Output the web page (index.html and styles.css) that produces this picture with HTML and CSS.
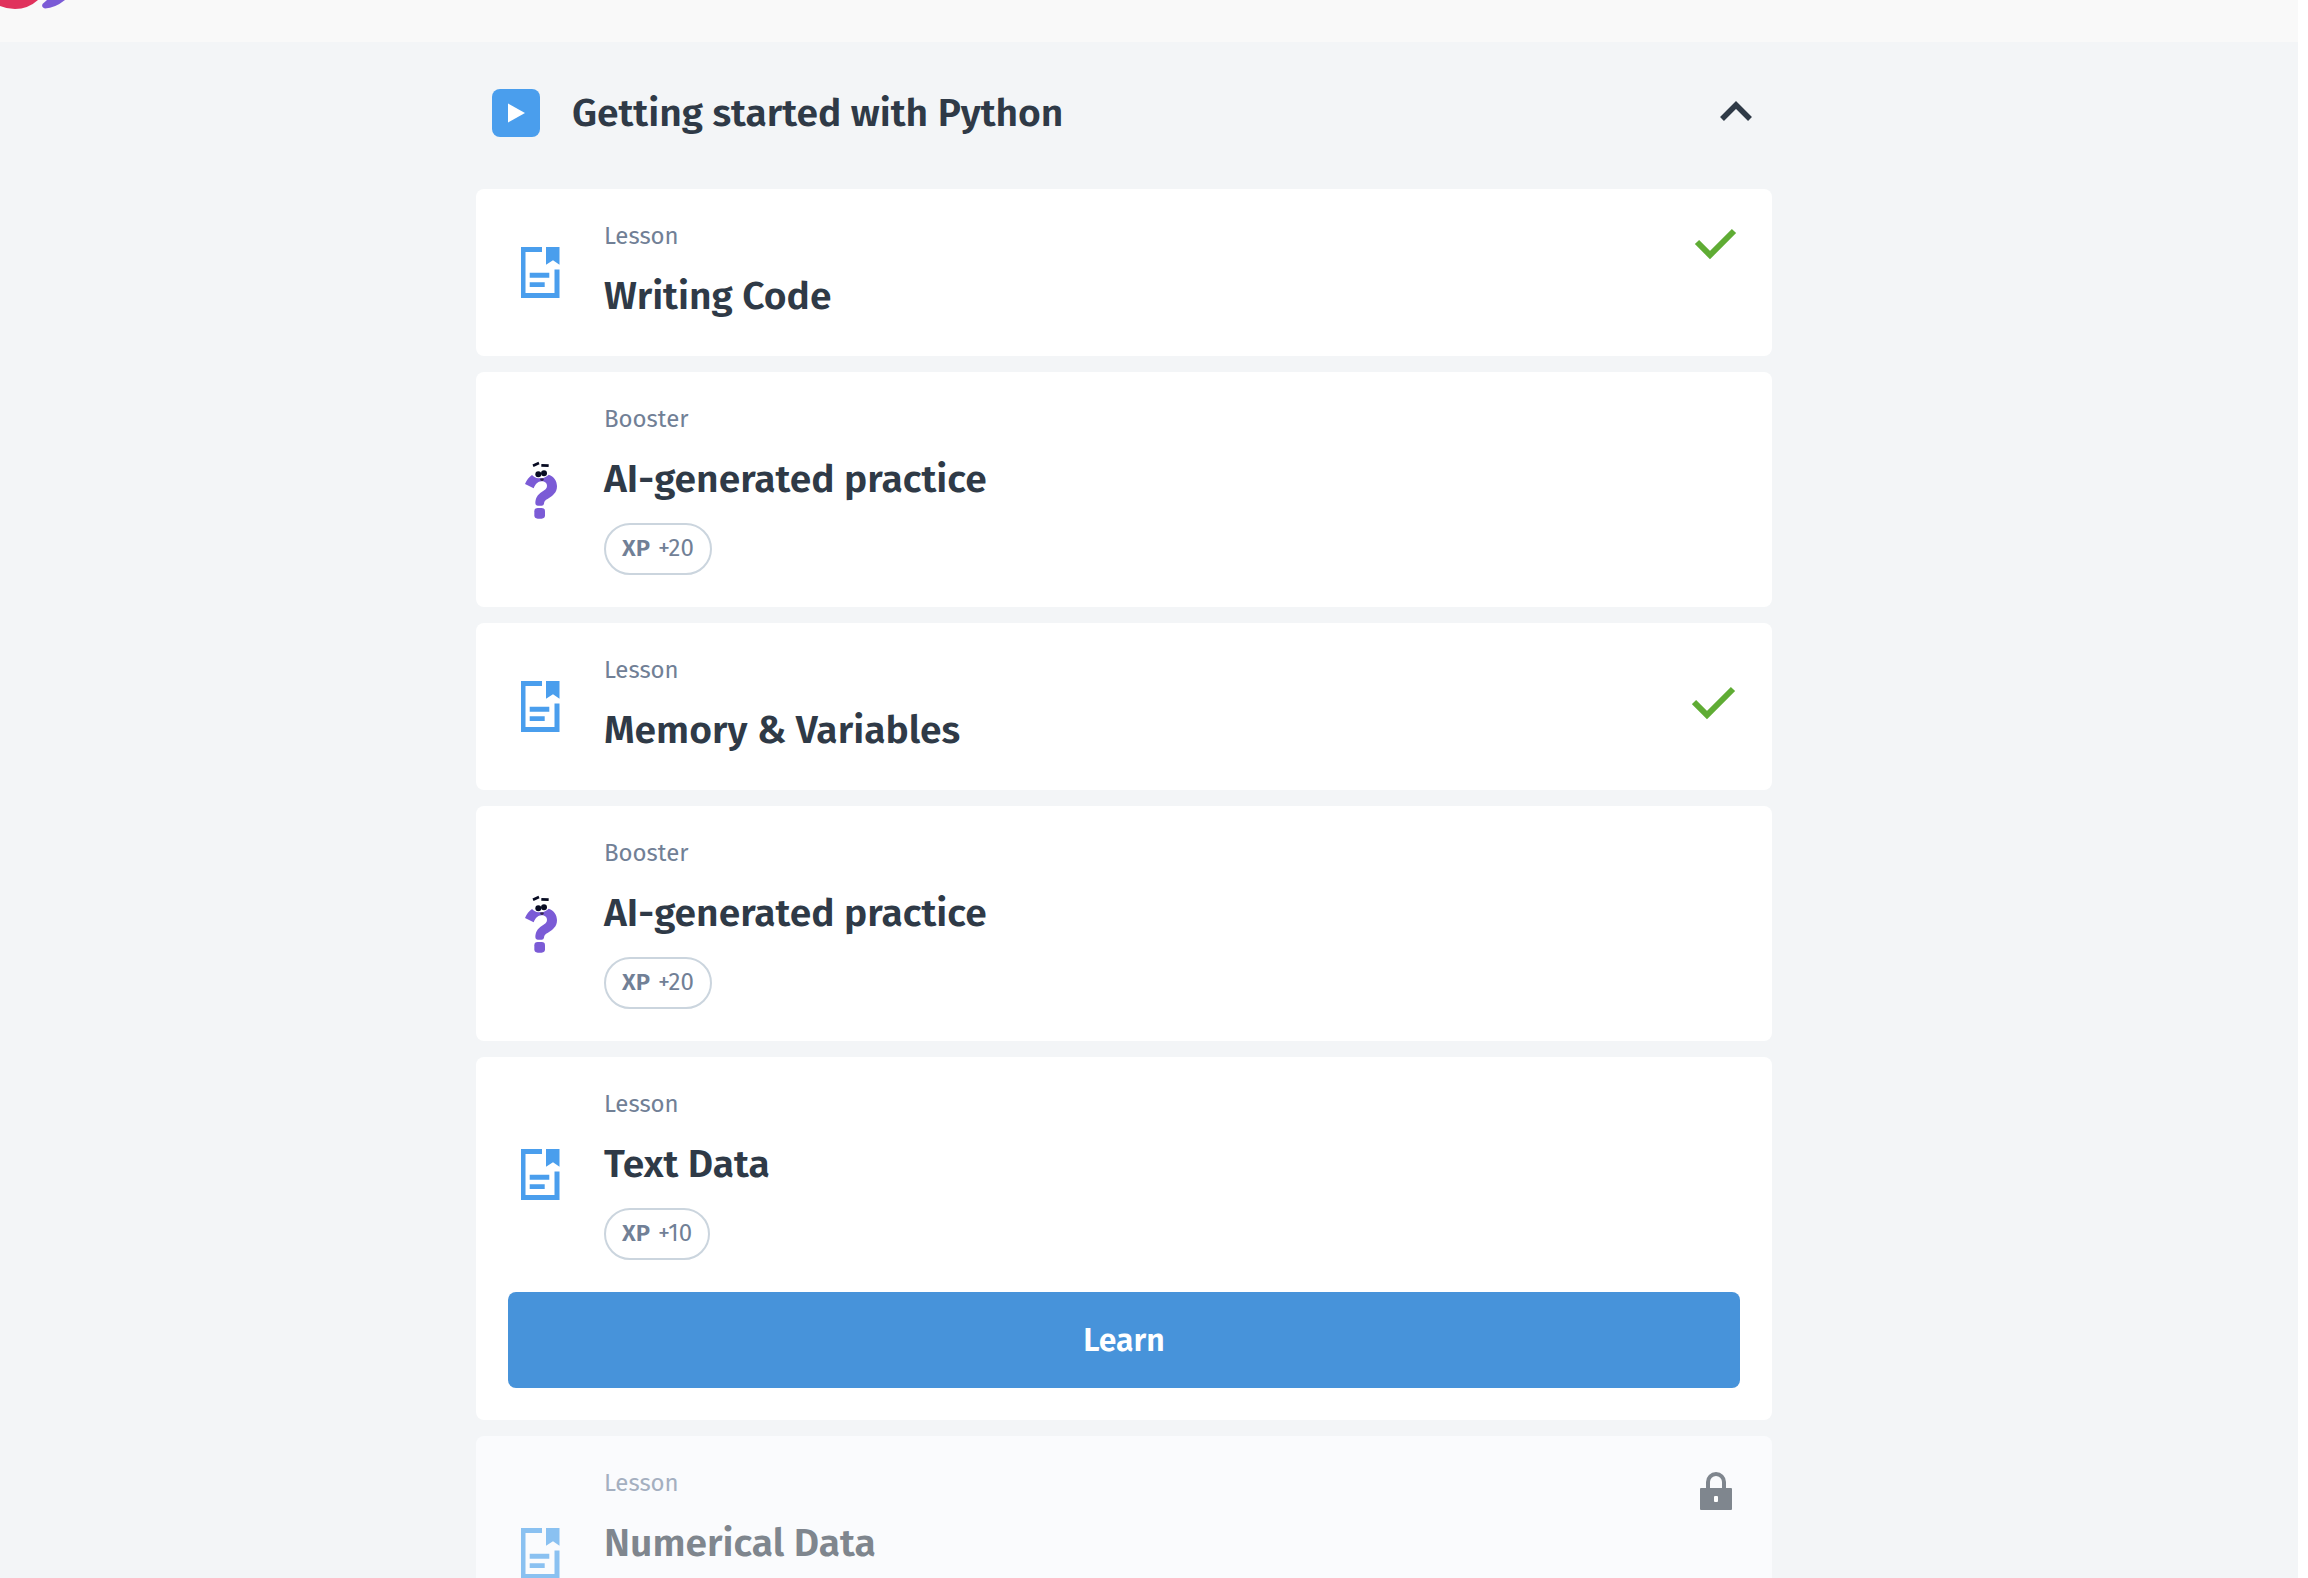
FILE: index.html
```html
<!DOCTYPE html>
<html lang="en">
<head>
<meta charset="utf-8">
<meta name="viewport" content="width=device-width, initial-scale=1">
<title>Getting started with Python</title>
<link rel="stylesheet" href="styles.css">
</head>
<body>
<svg class="sprite" aria-hidden="true">
  <symbol id="lesson" viewBox="0 0 64 64">
    <path fill="currentColor" d="M13 6h21v5H17.500v41H46.500V28.500H51.500V57H13zM38 6h13.500v17.700L45 19.300l-7 4.400zM21.700 31.700h19.600v5H21.700zM21.700 41.300h15v4.700h-15z"/>
  </symbol>
  <symbol id="booster" viewBox="-6 54 192 192">
    <path fill="#7b5bd6" d="M45 132C50 120 57 111 66 105C73 112 80 116 90 114C100 117 110 109 116 104C132 109 141 123 141 139C141 158 128 167 116 175C106 181 103 183 102 191Q101 197 95 197H83Q76 197 76 190C76 174 83 164 95 156C105 150 111 146 111 138C111 129 104 124 95 124C83 124 76 133 71 145z"/>
    <rect x="73" y="204" width="32" height="32" rx="10" fill="#7b5bd6"/>
    <path d="M69 77l18-8M94 76l22 1" fill="none" stroke="#070b22" stroke-width="8"/>
    <circle cx="85" cy="103" r="9" fill="#070b22"/>
    <circle cx="102" cy="100" r="9" fill="#070b22"/>
    <path d="M90 116q6-2 12 0q-1 7-6 7t-6-7z" fill="#33254f"/>
  </symbol>
</svg>
<div class="page">
  <header class="topbar">
    <svg class="logo" width="72" height="12" viewBox="0 0 72 12" role="img" aria-label="Logo">
      <path fill="#e0325c" d="M0 0H38Q28 9 15 9Q7 9 0 6z"/>
      <path fill="#7b5bd6" d="M47 0H65Q55 8 45 8.500Q41 7 42.500 4z"/>
    </svg>
  </header>
  <main class="content">
    <button class="section-head" type="button" aria-expanded="true">
      <svg class="play" viewBox="0 0 48 48" aria-hidden="true"><rect width="48" height="48" rx="8" fill="#4a9eed"/><path d="M16 14.500v19l17-9.500z" fill="#fff"/></svg>
      <span class="section-title">Getting started with Python</span>
      <svg class="mark" viewBox="0 0 48 48" aria-hidden="true"><path d="M10 30L24 16l14 14" fill="none" stroke="#2f3a47" stroke-width="5.500"/></svg>
    </button>
    <ul class="cards">
      <li class="card">
        <div class="row">
          <svg class="icon" aria-hidden="true"><use href="#lesson"/></svg>
          <div class="body"><p class="kind">Lesson</p><h2 class="title">Writing Code</h2></div>
          <svg class="mark" viewBox="0 0 48 48" role="img" aria-label="Completed"><path d="M5 21L18 34L42 10" fill="none" stroke="#5fac34" stroke-width="6"/></svg>
        </div>
      </li>
      <li class="card">
        <div class="row">
          <svg class="icon" aria-hidden="true"><use href="#booster"/></svg>
          <div class="body"><p class="kind">Booster</p><h2 class="title">AI-generated practice</h2><p class="xp"><b>XP</b><span>+20</span></p></div>
        </div>
      </li>
      <li class="card">
        <div class="row">
          <svg class="icon" aria-hidden="true"><use href="#lesson"/></svg>
          <div class="body"><p class="kind">Lesson</p><h2 class="title">Memory &amp; Variables</h2></div>
          <svg class="mark mark-center" viewBox="0 0 48 48" role="img" aria-label="Completed"><path d="M2 19L15 32L41 6" fill="none" stroke="#5fac34" stroke-width="6"/></svg>
        </div>
      </li>
      <li class="card">
        <div class="row">
          <svg class="icon" aria-hidden="true"><use href="#booster"/></svg>
          <div class="body"><p class="kind">Booster</p><h2 class="title">AI-generated practice</h2><p class="xp"><b>XP</b><span>+20</span></p></div>
        </div>
      </li>
      <li class="card">
        <div class="row">
          <svg class="icon" aria-hidden="true"><use href="#lesson"/></svg>
          <div class="body"><p class="kind">Lesson</p><h2 class="title">Text Data</h2><p class="xp"><b>XP</b><span>+10</span></p></div>
        </div>
        <button class="learn" type="button">Learn</button>
      </li>
      <li class="card card-locked">
        <div class="row">
          <svg class="icon" aria-hidden="true"><use href="#lesson"/></svg>
          <div class="body"><p class="kind">Lesson</p><h2 class="title">Numerical Data</h2></div>
          <svg class="mark" viewBox="0 0 48 48" role="img" aria-label="Locked"><path d="M16 21V14a8 8 0 0 1 16 0v7" fill="none" stroke="#7f868e" stroke-width="4"/><rect x="8" y="20" width="32" height="22" rx="1" fill="#7f868e"/><rect x="22" y="28" width="4" height="6" rx="1" fill="#fff"/></svg>
        </div>
      </li>
    </ul>
  </main>
</div>
</body>
</html>
```
FILE: styles.css
```css
* { box-sizing: border-box; }

body {
  margin: 0;
  padding-right: 10px;
  background: #fff;
  color: #2f3a47;
  font-family: "Fira Sans", Roboto, "Noto Sans", sans-serif;
}

p, h2, ul { margin: 0; padding: 0; }
ul { list-style: none; }
button { border: 0; font: inherit; color: inherit; cursor: pointer; }
svg { display: block; flex: none; }

.sprite { position: absolute; width: 0; height: 0; }

.page {
  height: 100vh;
  overflow-y: auto;
  scrollbar-width: none;
  background: #f3f5f7;
}

.topbar { height: 42px; background: #f9f9f9; }

.content {
  padding: 47px 50px 47px 0;
}

.section-head,
.cards {
  width: 100%;
  max-width: 1296px;
  margin: 0 auto;
}

.section-head {
  display: flex;
  align-items: center;
  gap: 32px;
  padding: 0 12px 0 16px;
  background: none;
  text-align: left;
}

.section-title {
  flex: 1;
  font-size: 39px;
  font-weight: 600;
  line-height: 48px;
}

.play, .mark { width: 48px; height: 48px; }
.mark-center { align-self: center; }

.cards {
  display: flex;
  flex-direction: column;
  gap: 16px;
  margin-top: 52px;
}

.card {
  padding: 32px;
  border-radius: 8px;
  background: #fff;
}

.row { display: flex; gap: 32px; }
.icon { width: 64px; height: 64px; align-self: center; color: #4a9eed; }
.body { flex: 1; }

.kind {
  color: #718096;
  font-size: 24px;
  line-height: 31px;
}

.title {
  margin-top: 16px;
  font-size: 39px;
  font-weight: 600;
  line-height: 56px;
}

.xp {
  display: flex;
  align-items: center;
  gap: 8px;
  width: max-content;
  height: 52px;
  margin-top: 16px;
  padding: 0 16px 2px;
  border: 2px solid #cbd5de;
  border-radius: 26px;
  color: #718096;
  font-size: 24px;
}

.xp b { font-weight: 600; }

.learn {
  width: 100%;
  margin-top: 32px;
  padding: 24px;
  border-radius: 8px;
  background: #4793da;
  color: #fff;
  font-size: 32px;
  font-weight: 600;
  line-height: 48px;
}

.card-locked { background: #fafbfd; }
.card-locked .row { min-height: 171px; }
.card-locked .icon { color: #8ac1f1; }
.card-locked .kind { color: #a4afc0; }
.card-locked .title { color: #7f868e; }
```
